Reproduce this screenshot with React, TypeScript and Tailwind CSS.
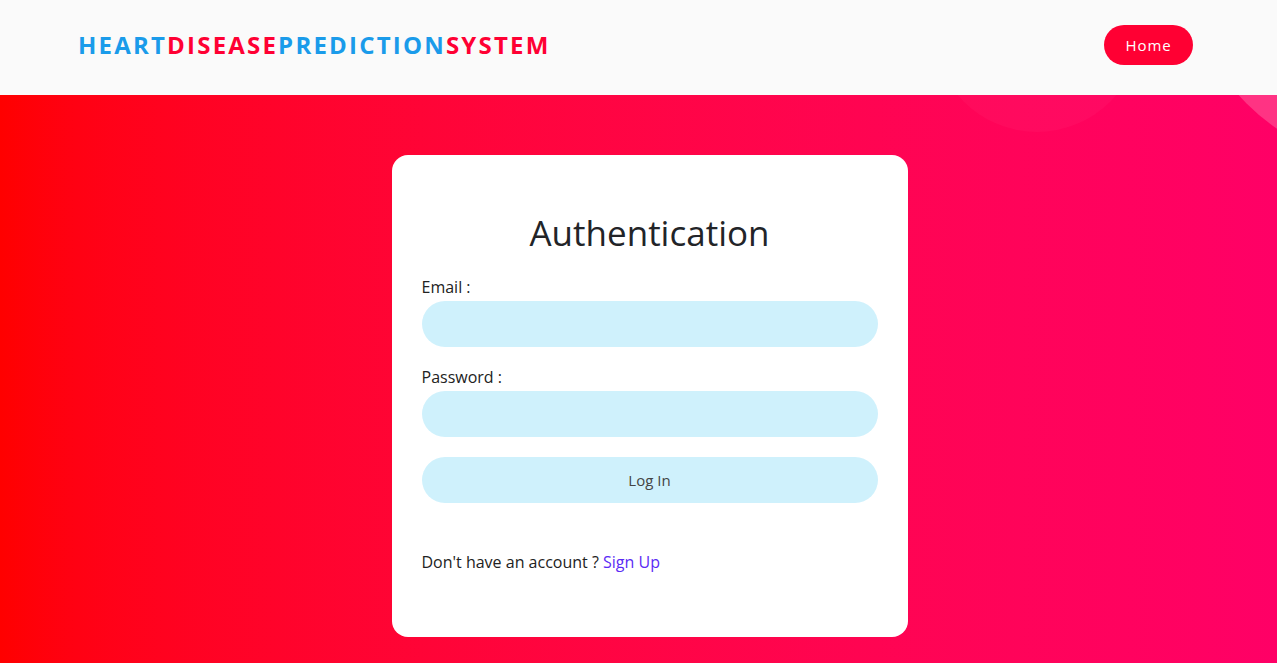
export default function App() {
  return (
    <div
      className="flex flex-col h-[663px] overflow-hidden"
      style={{ fontFamily: "'Open Sans', Inter, sans-serif" }}
    >
      <header className="relative z-10 flex items-center justify-between h-[95px] bg-[#fafafa] pl-[78px] pr-[84px] pb-[5px]">
        <h1 className="text-[24px] font-bold tracking-[2.2px] leading-none">
          <span className="text-[#1a9bea]">HEART</span>
          <span className="text-[#ff0033]">DISEASE</span>
          <span className="text-[#1a9bea]">PREDICTION</span>
          <span className="text-[#ff0033]">SYSTEM</span>
        </h1>
        <button className="h-[40px] w-[89px] rounded-full bg-[#ff0033] text-white text-[15px] tracking-[0.06em]">
          Home
        </button>
      </header>
      <main className="relative flex-grow bg-gradient-to-r from-[#ff0000] to-[#ff0066] flex justify-center pt-[60px] pl-[22px]">
        <div className="absolute left-[933px] top-[-171px] w-[208px] h-[208px] rounded-full bg-white/[0.03]" />
        <div className="absolute left-[1183px] top-[-362px] w-[434px] h-[434px] rounded-full bg-white/20" />
        <section className="relative w-[516px] h-[482px] bg-white rounded-2xl px-[30px] pt-[56px]">
          <h2 className="text-center text-[35px] leading-[44px] text-[#222428] font-medium">Authentication</h2>
          <form className="mt-[21px] flex flex-col">
            <label className="text-[16px] leading-[22px] text-[#222]">Email :</label>
            <input
              type="email"
              className="mt-[3px] h-[46px] rounded-full bg-[#cff1fc] outline-none px-5"
            />
            <label className="mt-[19px] text-[16px] leading-[22px] text-[#222]">Password :</label>
            <input
              type="password"
              className="mt-[3px] h-[46px] rounded-full bg-[#cff1fc] outline-none px-5"
            />
            <button
              type="button"
              className="mt-[20px] h-[46px] rounded-full bg-[#cff1fc] text-[15px] text-[#444]"
            >
              Log In
            </button>
          </form>
          <p className="mt-[47px] text-[16px] text-[#222]">
            Don't have an account ? <a className="text-[#5b2bf5]">Sign Up</a>
          </p>
        </section>
      </main>
    </div>
  );
}
